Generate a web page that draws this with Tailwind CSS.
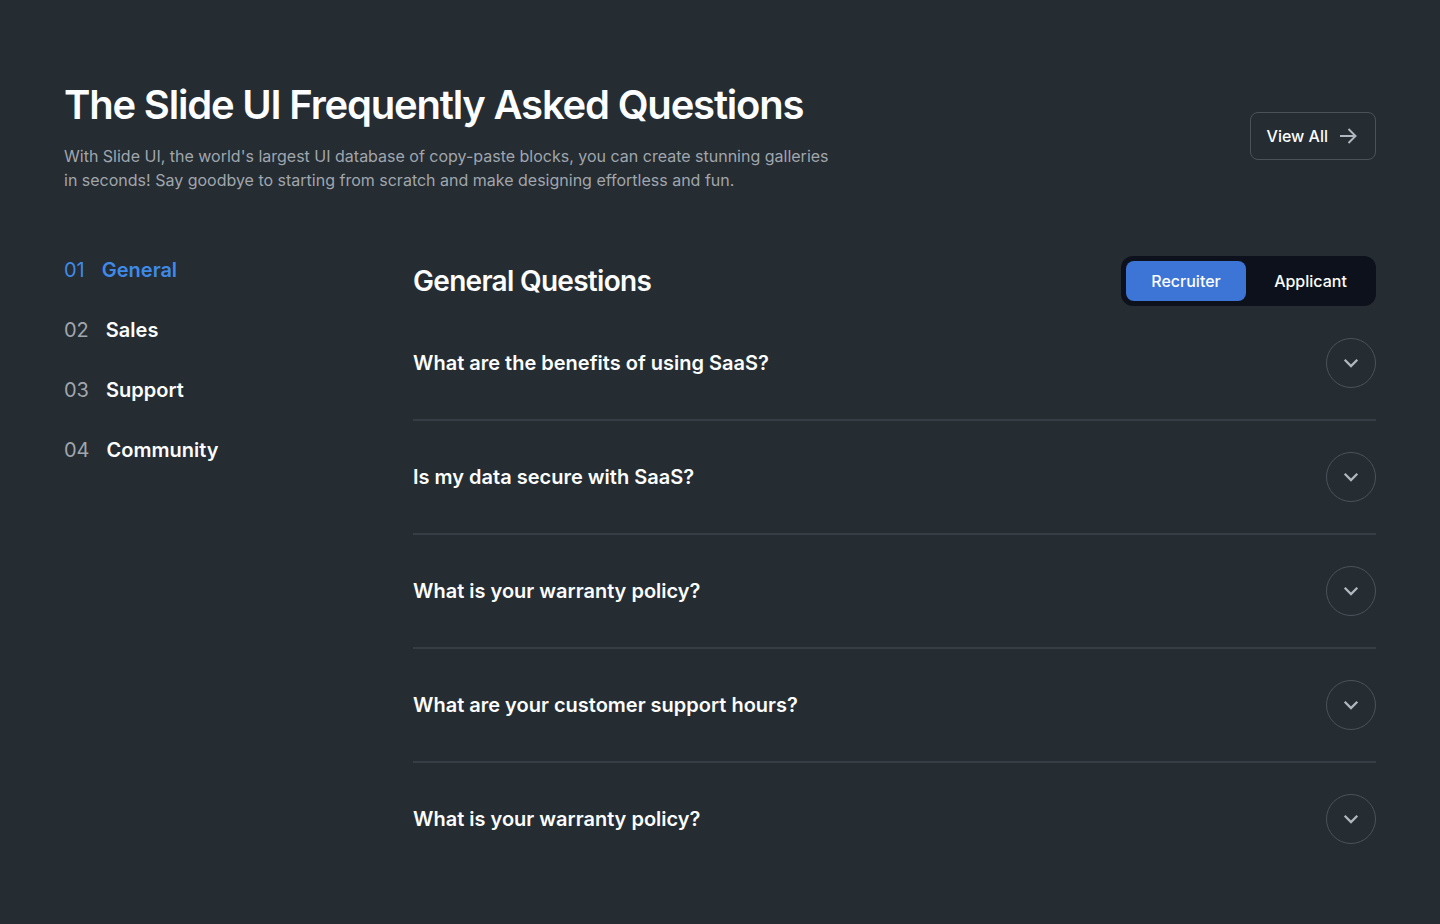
<!DOCTYPE html>
<html lang="en">
<head>
<meta charset="utf-8">
<meta name="viewport" content="width=device-width, initial-scale=1">
<title>Slide UI FAQ</title>
<script src="https://cdn.jsdelivr.net/npm/@tailwindcss/browser@4"></script>
</head>
<body class="min-h-screen bg-[#252c32] font-['Inter',sans-serif] text-[#fbfdfe] antialiased">
<svg class="hidden" aria-hidden="true">
  <symbol id="chevron" viewBox="0 0 24 24"><path d="M5.700 8.800l6.300 6.300 6.300-6.300" fill="none" stroke="currentColor" stroke-width="2.300"/></symbol>
</svg>
<main class="px-16 py-20">
  <header class="flex items-center justify-between gap-8">
    <div class="max-w-[780px]">
      <h1 class="text-[40px] leading-[50px] font-semibold tracking-[-0.03em]">The Slide UI Frequently Asked Questions</h1>
      <p class="mt-[14px] text-base leading-6 text-[#a0a6ad]">With Slide UI, the world's largest UI database of copy-paste blocks, you can create stunning galleries in seconds! Say goodbye to starting from scratch and make designing effortless and fun.</p>
    </div>
    <a href="#" class="flex h-12 shrink-0 items-center gap-2 rounded-lg border border-[#4b5259] pr-[15px] pl-4 text-base font-medium">View All
      <svg class="size-6" viewBox="0 0 24 24" fill="none" stroke="#b0b7be" stroke-width="2" aria-hidden="true"><path d="M4 12h15.500M12.500 5l7 7-7 7"/></svg>
    </a>
  </header>
  <div class="mt-16 flex items-start">
    <nav class="w-[349px] shrink-0" aria-label="Categories">
      <ul class="flex flex-col gap-8 text-xl leading-7 font-semibold">
        <li><a href="#" class="flex gap-[17px] text-[#3f8ae8]"><span class="font-normal">01</span>General</a></li>
        <li><a href="#" class="flex gap-[17px]"><span class="font-normal text-[#a0a6ad]">02</span>Sales</a></li>
        <li><a href="#" class="flex gap-[17px]"><span class="font-normal text-[#a0a6ad]">03</span>Support</a></li>
        <li><a href="#" class="flex gap-[17px]"><span class="font-normal text-[#a0a6ad]">04</span>Community</a></li>
      </ul>
    </nav>
    <section class="min-w-0 grow">
      <div class="flex items-center justify-between">
        <h2 class="text-[28px] leading-9 font-semibold tracking-tight">General Questions</h2>
        <div class="flex gap-1 rounded-xl bg-[#0d111c] p-[5px] text-base font-medium">
          <button type="button" class="h-10 w-[120px] rounded-lg bg-[#3c75d6]">Recruiter</button>
          <button type="button" class="h-10 w-[121px] rounded-lg">Applicant</button>
        </div>
      </div>
      <ul class="divide-y-2 divide-[#363d44] pt-px text-xl leading-7 font-semibold">
        <li class="flex items-center justify-between py-[31px]"><h3>What are the benefits of using SaaS?</h3><button type="button" aria-label="Show answer" class="flex size-[50px] items-center justify-center rounded-full border border-[#4b5259] text-[#b0b7be]"><svg class="size-6"><use href="#chevron"/></svg></button></li>
        <li class="flex items-center justify-between py-[31px]"><h3>Is my data secure with SaaS?</h3><button type="button" aria-label="Show answer" class="flex size-[50px] items-center justify-center rounded-full border border-[#4b5259] text-[#b0b7be]"><svg class="size-6"><use href="#chevron"/></svg></button></li>
        <li class="flex items-center justify-between py-[31px]"><h3>What is your warranty policy?</h3><button type="button" aria-label="Show answer" class="flex size-[50px] items-center justify-center rounded-full border border-[#4b5259] text-[#b0b7be]"><svg class="size-6"><use href="#chevron"/></svg></button></li>
        <li class="flex items-center justify-between py-[31px]"><h3>What are your customer support hours?</h3><button type="button" aria-label="Show answer" class="flex size-[50px] items-center justify-center rounded-full border border-[#4b5259] text-[#b0b7be]"><svg class="size-6"><use href="#chevron"/></svg></button></li>
        <li class="flex items-center justify-between pt-[31px]"><h3>What is your warranty policy?</h3><button type="button" aria-label="Show answer" class="flex size-[50px] items-center justify-center rounded-full border border-[#4b5259] text-[#b0b7be]"><svg class="size-6"><use href="#chevron"/></svg></button></li>
      </ul>
    </section>
  </div>
</main>
</body>
</html>
